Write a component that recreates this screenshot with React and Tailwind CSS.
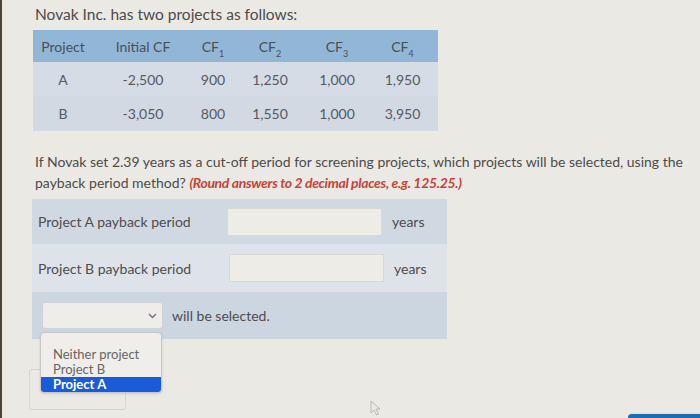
import React from 'react'

const cols = [
  { key: 'p', label: 'Project', w: 'w-[60px]' },
  { key: 'i', label: 'Initial CF', w: 'w-[100px]' },
  { key: 'c1', label: '1', w: 'w-[40px]' },
  { key: 'c2', label: '2', w: 'w-[74px]' },
  { key: 'c3', label: '3', w: 'w-[60px]' },
  { key: 'c4', label: '4', w: 'w-[71px]' },
]

const rows = [
  { id: 'A', vals: ['A', '-2,500', '900', '1,250', '1,000', '1,950'], bg: 'bg-[#d5dce5]', h: 'h-[34px]' },
  { id: 'B', vals: ['B', '-3,050', '800', '1,550', '1,000', '3,950'], bg: 'bg-[#d2d9e3]', h: 'h-[35px]' },
]

const CashTable = () => (
  <div className="mt-[6px] w-[405px] text-[14px]">
    <div className="flex h-[32px] items-center bg-[#92b6d6] text-[#4a4f56]">
      {cols.map((c, i) => (
        <div key={c.key} className={`${c.w} text-center`}>
          {i < 2 ? c.label : (
            <span>CF<sub className="text-[9px] align-[-3px]">{c.label}</sub></span>
          )}
        </div>
      ))}
    </div>
    {rows.map((r) => (
      <div key={r.id} className={`flex items-center ${r.h} ${r.bg} text-[#555a60]`}>
        {r.vals.map((v, i) => (
          <div key={i} className={`${cols[i].w} text-center`}>{v}</div>
        ))}
      </div>
    ))}
  </div>
)

const AnswerRow = ({ label, bg, h, inputX }) => (
  <div className={`flex items-center ${h} ${bg} pl-[6px]`}>
    <div className={`${inputX}`}>{label}</div>
    <div className="w-[155px] h-[28px] bg-[#eeece7] border border-[#d9d8d3]" />
    <div className="ml-[10px]">years</div>
  </div>
)

export default function App() {
  return (
    <div className="relative w-[700px] h-[418px] overflow-hidden bg-[#ebe9e4] border-l-2 border-[#4d443c] font-['Lato',sans-serif] text-[#4b4b4b]">
      <div className="pl-[31px] pt-[4px]">
        <p className="ml-[2px] text-[15.5px] leading-[20px]">Novak Inc. has two projects as follows:</p>
        <CashTable />

        <p className="mt-[20px] ml-[2px] text-[14px] leading-[21px] w-[665px]">
          If Novak set 2.39 years as a cut-off period for screening projects, which projects will be selected, using the
          payback period method?{' '}
          <span className="font-bold italic tracking-[-0.35px] text-[#c9423a]">(Round answers to 2 decimal places, e.g. 125.25.)</span>
        </p>

        <div className="mt-[6px] -ml-px w-[415px] text-[14px] text-[#4d4d4d]">
          <AnswerRow label="Project A payback period" bg="bg-[#d0d9e2]" h="h-[45px]" inputX="w-[189px]" />
          <AnswerRow label="Project B payback period" bg="bg-[#dee3e9]" h="h-[48px]" inputX="w-[191px]" />
          <div className="flex items-center h-[47px] bg-[#ccd6e1] pl-[10px]">
            <div className="flex items-center justify-end w-[121px] h-[27px] bg-[#eeede9] border border-[#cfd2d6] rounded-[3px] pr-[5px]">
              <svg width="9" height="6" viewBox="0 0 9 6" fill="none" stroke="#6b7380" strokeWidth="1.4">
                <path d="M1 1l3.5 3.5L8 1" />
              </svg>
            </div>
            <div className="ml-[9px]">will be selected.</div>
          </div>
        </div>
      </div>

      <div className="absolute left-[27px] top-[369px] w-[97px] h-[41px] rounded-[3px] border border-[#d6d4cf] bg-[#ebe9e4]" />

      <div className="absolute left-[38px] top-[332px] w-[122px] h-[61px] rounded-[4px] border border-[#c7c8ca] bg-[#efeeea] shadow-sm overflow-hidden text-[13px] leading-[15px] text-[#666]">
        <div className="h-[14px]" />
        <div className="pl-[12px]">Neither project</div>
        <div className="pl-[12px]">Project B</div>
        <div className="pl-[12px] bg-[#1a5bd8] text-white font-bold">Project A</div>
      </div>

      <svg className="absolute left-[368px] top-[400px]" width="12" height="16" viewBox="0 0 12 16" fill="none" stroke="#b9b9b9" strokeWidth="1">
        <path d="M1 1v12l3-3 2.5 5 2-1-2.5-5H10z" />
      </svg>

      <div className="absolute left-[626px] top-[413px] w-[80px] h-[10px] rounded-t-[4px] border-t border-[#d8e2ec] bg-[#1f6cb0]" />
    </div>
  )
}
